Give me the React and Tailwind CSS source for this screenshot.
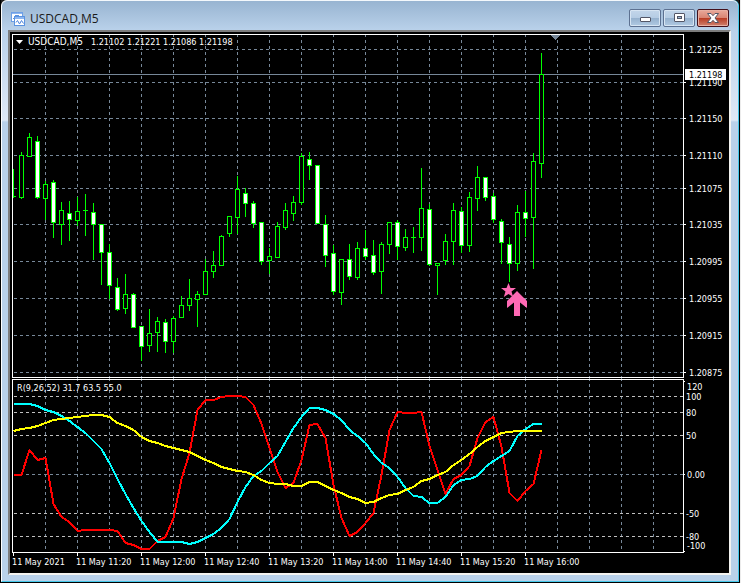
import React from 'react';

const GRID = '#778899';
const BAR_STEP = 8;
const FIRST_BAR = 13;

// [high, open/close top, open/close bottom, low, direction]
const candles = [
  [169, 196, 197, 198, 0], [152, 155, 198, 199, 1], [133, 137, 157, 157, 1], [136, 141, 198, 199, -1],
  [181, 184, 199, 220, 1], [180, 182, 223, 238, -1], [202, 210, 225, 245, 1], [201, 213, 220, 241, -1],
  [197, 211, 221, 226, 1], [194, 210, 211, 236, 0], [203, 212, 225, 260, -1], [224, 224, 253, 285, -1],
  [244, 252, 286, 299, -1], [278, 287, 310, 311, -1], [274, 294, 309, 314, 1], [293, 294, 328, 328, -1],
  [326, 326, 347, 361, -1], [309, 333, 346, 352, 1], [317, 321, 333, 352, 1], [319, 322, 342, 353, -1],
  [316, 318, 342, 353, 1], [296, 305, 318, 318, 1], [279, 298, 306, 311, 1], [291, 294, 300, 327, 1],
  [259, 271, 295, 295, 1], [251, 265, 272, 278, 1], [235, 236, 266, 266, 1], [216, 216, 234, 237, 1],
  [176, 189, 218, 234, 1], [188, 193, 204, 217, -1], [201, 203, 224, 228, -1], [222, 222, 262, 265, -1],
  [248, 256, 261, 274, 1], [222, 226, 258, 258, 1], [203, 210, 228, 230, 1], [196, 202, 214, 221, 1],
  [153, 156, 203, 205, 1], [152, 159, 166, 180, -1], [165, 165, 224, 224, -1], [215, 224, 256, 267, -1],
  [245, 253, 292, 295, -1], [259, 259, 293, 305, 1], [244, 259, 277, 280, -1], [242, 248, 278, 280, 1],
  [230, 248, 257, 260, -1], [240, 255, 273, 275, -1], [242, 244, 272, 294, 1], [222, 222, 245, 254, 1],
  [220, 222, 247, 260, -1], [229, 237, 248, 251, 1], [227, 237, 238, 253, 0], [168, 208, 238, 251, 1],
  [204, 209, 265, 266, -1], [263, 263, 266, 295, 1], [234, 241, 261, 265, 1], [203, 210, 242, 265, 1],
  [207, 211, 246, 253, -1], [192, 197, 246, 252, 1], [166, 177, 199, 211, 1], [177, 177, 198, 201, -1],
  [193, 196, 220, 223, -1], [219, 221, 243, 264, -1], [237, 244, 264, 282, -1], [205, 212, 264, 271, 1],
  [191, 212, 219, 237, -1], [153, 161, 218, 269, 1], [53, 74, 164, 178, 1],
];

const fast = [
  475, 475, 450, 460, 458, 504, 517, 522, 531, 530, 530, 530, 530, 531, 543, 545, 549, 549, 541, 537, 518, 479, 453,
  410, 400, 400, 397, 396, 396, 397, 405, 424, 448, 472, 488, 483, 460, 425, 424, 438, 485, 518, 536, 532, 523, 513,
  475, 430, 412, 413, 413, 412, 446, 470, 494, 479, 475, 466, 438, 422, 417, 447, 493, 501, 491, 484, 450,
];

const medium = [
  404, 404, 404, 406, 410, 412, 416, 421, 427, 433, 441, 449, 463, 479, 494, 508, 521, 532, 542, 542, 542, 542, 544,
  542, 538, 534, 528, 519, 502, 487, 476, 471, 463, 456, 442, 428, 417, 408, 408, 410, 414, 420, 430, 436, 443, 454,
  463, 468, 477, 488, 496, 497, 503, 503, 497, 485, 480, 479, 476, 467, 461, 456, 451, 436, 429, 424, 424,
];

const slow = [
  431, 429, 428, 426, 423, 420, 419, 418, 417, 416, 415, 415, 417, 423, 426, 430, 437, 441, 443, 446, 448, 450, 452,
  456, 460, 463, 467, 469, 471, 472, 475, 480, 483, 484, 484, 486, 486, 482, 482, 486, 490, 493, 497, 499, 503, 502,
  498, 495, 494, 490, 487, 481, 479, 475, 472, 465, 460, 454, 447, 441, 437, 433, 432, 431, 431, 431, 431,
];

const priceLevels = [
  { y: 49, label: '1.21225' },
  { y: 82, label: '1.21190' },
  { y: 118, label: '1.21150' },
  { y: 155, label: '1.21110' },
  { y: 188, label: '1.21075' },
  { y: 224, label: '1.21035' },
  { y: 261, label: '1.20995' },
  { y: 298, label: '1.20955' },
  { y: 335, label: '1.20915' },
  { y: 372, label: '1.20875' },
];

const oscillatorLevels = [
  { y: 396, color: '#c0c0c0' },
  { y: 412, color: '#c0c0c0' },
  { y: 435, color: '#c0c0c0' },
  { y: 474, color: GRID },
  { y: 513, color: '#c0c0c0' },
  { y: 536, color: '#c0c0c0' },
];

const oscillatorLabels = [
  { x: 687, y: 390, label: '120' },
  { x: 686, y: 400, label: '100' },
  { x: 686, y: 416, label: '80' },
  { x: 686, y: 439, label: '50' },
  { x: 687, y: 478, label: '0.00' },
  { x: 686, y: 517, label: '-50' },
  { x: 686, y: 540, label: '-80' },
  { x: 687, y: 549, label: '-100' },
];

const times = [
  '11 May 2021', '11 May 11:20', '11 May 12:00', '11 May 12:40', '11 May 13:20',
  '11 May 14:00', '11 May 14:40', '11 May 15:20', '11 May 16:00',
];

const columns = Array.from({ length: 20 }, (_, i) => 45 + i * 32);

const barX = (i) => FIRST_BAR + i * BAR_STEP;
const toPoints = (values) => values.map((y, i) => `${barX(i) + 0.5},${y}`).join(' ');

const Candle = ({ x, data }) => {
  const [high, top, bottom, low, direction] = data;
  if (direction === 0) {
    return (
      <g fill="#00ff00">
        <rect x={x} y={high} width="1" height={low - high} />
        <rect x={x - 2} y={top} width="5" height="1" />
      </g>
    );
  }
  return (
    <g>
      <rect x={x} y={high} width="1" height={low - high} fill="#00ff00" />
      <rect x={x - 2} y={top} width="5" height={bottom - top} fill="#00ff00" />
      <rect x={x - 1} y={top + 1} width="3" height={bottom - top - 2} fill={direction > 0 ? '#000' : '#fff'} />
    </g>
  );
};

const GridColumns = ({ top, bottom }) =>
  columns.map((x) => (
    <line key={x} x1={x + 0.5} x2={x + 0.5} y1={top} y2={bottom} stroke={GRID} strokeDasharray="3 3" />
  ));

const PriceChart = () => (
  <svg viewBox="10 32 719 346" className="block w-full" shapeRendering="crispEdges" role="img" aria-label="USDCAD price">
    <defs>
      <clipPath id="price-plot">
        <rect x="13" y="35" width="670" height="342" />
      </clipPath>
    </defs>
    <GridColumns top={34} bottom={378} />
    {priceLevels.map(({ y }) => (
      <line key={y} x1="14" x2="683" y1={y + 0.5} y2={y + 0.5} stroke={GRID} strokeDasharray="3 3" />
    ))}
    <rect x="13" y="74" width="670" height="1" fill={GRID} />
    <g clipPath="url(#price-plot)">
      {candles.map((data, i) => (
        <Candle key={i} x={barX(i)} data={data} />
      ))}
    </g>
    <path d="M550 35h10l-5 5z" fill={GRID} />
    <g fill="#ff69b4" shapeRendering="auto">
      <path d="M508.5 283l2 5h5.500l-4.500 3.500 1.700 5.500-4.700-3-4.700 3 1.700-5.500-4.500-3.500h5.500z" />
      <path d="M517 291l10 10v7l-7-5.500V316h-6v-13.500l-7 5.500v-7z" />
    </g>
    <path d="M12.500 377.500V34.500H683.500V377.500z" fill="none" stroke="#fff" />
    {priceLevels.map(({ y }) => (
      <rect key={y} x="684" y={y} width="2" height="1" fill="#fff" />
    ))}
    <g fill="#fff" className="font-['DejaVu_Sans_Condensed','DejaVu_Sans',sans-serif] text-[9px]">
      {priceLevels.map(({ y, label }) => (
        <text key={y} x="689" y={y + 4}>{label}</text>
      ))}
      <rect x="685" y="69" width="41" height="11" />
      <text x="689" y="78" fill="#000">1.21198</text>
    </g>
  </svg>
);

const OscillatorChart = () => (
  <svg viewBox="10 378 719 195" className="block w-full" shapeRendering="crispEdges" role="img" aria-label="R oscillator">
    <GridColumns top={378} bottom={552} />
    {oscillatorLevels.map(({ y, color }) => (
      <line key={y} x1="14" x2="683" y1={y + 0.5} y2={y + 0.5} stroke={color} strokeDasharray="3 3" />
    ))}
    <g fill="none" strokeWidth="2" strokeLinejoin="round">
      <polyline points={toPoints(fast)} stroke="#ff0000" />
      <polyline points={toPoints(medium)} stroke="#00ffff" />
      <polyline points={toPoints(slow)} stroke="#ffff00" />
    </g>
    <path d="M12.500 552.500V379.500H683.500V552.500z" fill="none" stroke="#fff" />
    {[381, 474, 551].map((y) => (
      <rect key={y} x="684" y={y} width="1" height="1" fill="#fff" />
    ))}
    <g fill="#fff" className="font-['DejaVu_Sans_Condensed','DejaVu_Sans',sans-serif] text-[9px]">
      {oscillatorLabels.map(({ x, y, label }) => (
        <text key={label} x={x} y={y}>{label}</text>
      ))}
      {times.map((time, i) => (
        <g key={time}>
          <rect x={FIRST_BAR + i * 64} y="553" width="1" height="3" />
          <text x={12 + i * 64} y="565">{time}</text>
        </g>
      ))}
    </g>
  </svg>
);

const ChartIcon = () => (
  <svg width="15" height="15" viewBox="0 0 15 15" shapeRendering="crispEdges" aria-hidden="true">
    <rect x="0.500" y="0.500" width="11" height="9" fill="#fff" stroke="#6d9fe6" />
    <rect x="1" y="1" width="10" height="1" fill="#8db6f0" />
    <path d="M2 6h1V4h1V3h1v2h1V3h1v1h1" fill="none" stroke="#5b93e0" />
    <rect x="3.500" y="4.500" width="10" height="9" fill="#fff" stroke="#5b93e0" />
    <rect x="4" y="5" width="9" height="2" fill="#8db6f0" />
    <path d="M5 10.500l1.500-2 2 3.500 2-3.500 2 3" fill="none" stroke="#4a83dc" shapeRendering="auto" />
  </svg>
);

const windowButton =
  'flex h-[18px] w-8 items-center justify-center rounded-[2px] border border-[#5d7191] bg-[linear-gradient(#c3d6ea_0%,#b5cce4_48%,#94b0cd_50%,#b1cae3_100%)] shadow-[inset_0_0_0_1px_#d7e5f3]';

const TitleBar = () => (
  <header className="flex h-[30px] items-start rounded-t-md border-t border-[#f4f8fc] bg-[linear-gradient(#98b4d1,#b9d1ea)] px-[9px]">
    <div className="flex flex-1 items-center gap-1 pt-[10px]">
      <ChartIcon />
      <h1 className="font-['Open_Sans',sans-serif] text-[12px] leading-4 text-[#1a1a1a]">USDCAD,M5</h1>
    </div>
    <div className="flex gap-[2px] pt-2">
      <button type="button" aria-label="Minimize" className={windowButton}>
        <svg width="11" height="6" viewBox="0 0 11 6" className="mt-[2px]" aria-hidden="true">
          <rect x="0.500" y="1.500" width="10" height="4" rx="0.500" fill="#fff" stroke="#535666" />
        </svg>
      </button>
      <button type="button" aria-label="Maximize" className={windowButton}>
        <svg width="11" height="10" viewBox="0 0 11 10" aria-hidden="true">
          <rect x="0.500" y="0.500" width="10" height="8" rx="0.500" fill="#fff" stroke="#535666" />
          <rect x="3.500" y="3.500" width="4" height="2" fill="#9db8d4" stroke="#535666" />
        </svg>
      </button>
      <button
        type="button"
        aria-label="Close"
        className="flex h-[18px] w-8 items-center justify-center rounded-[2px] border border-[#43101b] bg-[linear-gradient(#e9a99b_0%,#d98573_48%,#b83a22_50%,#d0826f_100%)] shadow-[inset_0_0_0_1px_#e8b0a3]"
      >
        <svg width="12" height="10" viewBox="0 0 12 10" aria-hidden="true">
          <path
            d="M0.500 0.500h3.500l2 2.200 2-2.200h3.500l-3.500 4.500 3.500 4.500h-3.500l-2-2.200-2 2.200h-3.500l3.500-4.500z"
            fill="#fff"
            stroke="#535666"
          />
        </svg>
      </button>
    </div>
  </header>
);

const App = () => {
  return (
    <div className="bg-[#ececec] pr-px">
      <div className="border-x border-b border-black bg-[#1c1c1c]">
        <main className="rounded-t-md border-r border-b border-l border-r-[#45c8ea] border-b-[#45c8ea] border-l-white bg-[#b9d1ea]">
          <TitleBar />
          <div className="bg-[linear-gradient(#b9d1ea,#dfe9f6_90px,#b9d1ea_92px)] pr-[7px] pb-[6px] pl-[6px]">
            <div className="border-2 border-t-[#7d7d7d] border-r-[#f3f3f0] border-b-[#f3f3f0] border-l-[#7d7d7d] bg-black">
              <div className="relative">
                <PriceChart />
                <div className="absolute top-1 left-1 flex items-center text-white font-['DejaVu_Sans_Condensed','DejaVu_Sans',sans-serif] text-[9px] leading-3">
                  <svg width="7" height="4" viewBox="0 0 7 4" className="mr-[5px] ml-[2px]" aria-hidden="true">
                    <path d="M0 0h7L3.500 4z" fill="#fff" />
                  </svg>
                  <span className="mr-2 text-[10px]">USDCAD,M5</span>
                  <span>1.21102 1.21221 1.21086 1.21198</span>
                </div>
              </div>
              <div className="relative">
                <OscillatorChart />
                <p className="absolute top-1 left-[7px] text-white font-['DejaVu_Sans_Condensed','DejaVu_Sans',sans-serif] text-[9px] leading-3">
                  R(9,26,52) 31.7 63.5 55.0
                </p>
              </div>
            </div>
          </div>
        </main>
      </div>
    </div>
  );
};

export default App;
